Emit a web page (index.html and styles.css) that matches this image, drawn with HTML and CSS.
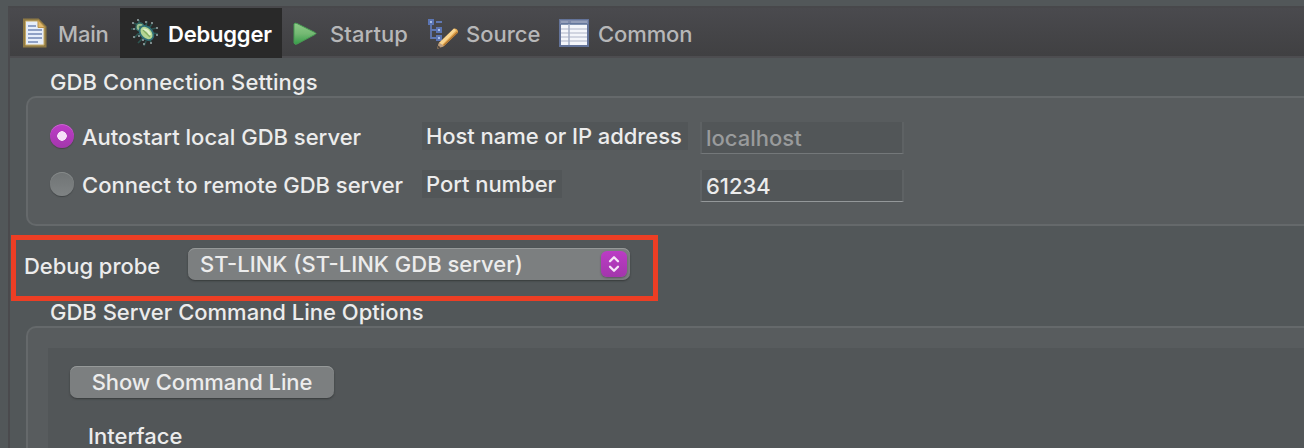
FILE: index.html
```html
<!DOCTYPE html>
<html lang="en">
<head>
<meta charset="utf-8">
<title>Debugger</title>
<link rel="stylesheet" href="styles.css">
</head>
<body>
<div class="window">
  <nav class="tabs">
    <div class="tab tab-main">
      <svg class="icon" width="26" height="32" viewBox="0 0 26 32">
        <path d="M2.500 3H16L23 10V29H2.500Z" fill="#e6eefb" stroke="#8f7a45" stroke-width="3"/>
        <path d="M3.500 4H16L22 10V28H3.500Z" fill="#e6eefb" stroke="#c9ad69"/>
        <path d="M16 3L23 10.500H16Z" fill="#e2b96b" stroke="#b9924a"/>
        <path d="M6 9H14M6 13H20M6 17H20M6 21H20M6 25H16" stroke="#8fa1c6" stroke-width="2"/>
      </svg><span>Main</span>
    </div>
    <div class="tab tab-debugger">
      <svg class="icon" width="32" height="32" viewBox="0 0 32 32">
        <path d="M10 3V6L12 9M3 6L7 7L10 10M2 12H7L12 12M18 4L17 9M23 7L20 11M5 21L9 17L13 16M9 26L14 21M15 29L17 24M22 26L21 22M29 17L24 16M28 11L23 12" fill="none" stroke="#2d5450" stroke-width="1.700"/>
        <path d="M9 2V4M3 6H5M22 6H24M27 11H29M4 20H6M9 19H11M14 27H16M21 26H23M27 18H29M17 4V6M4 12H6M14 22V24" stroke="#7e8b8c" stroke-width="2"/>
        <circle cx="11" cy="10" r="4" fill="#9dbf91" stroke="#2e6664" stroke-width="1.300"/>
        <circle cx="11" cy="10" r="1.300" fill="#4f8550"/>
        <ellipse cx="17.500" cy="16" rx="5.800" ry="8" transform="rotate(-43 17.500 16)" fill="#b5d693" stroke="#306f78" stroke-width="1.800"/>
        <path d="M14 13Q19 12 21 18" fill="none" stroke="#dff0ca" stroke-width="2.500"/>
        <path d="M14 13L21 20" stroke="#83ad62" stroke-width="1.300"/>
      </svg><span>Debugger</span>
    </div>
    <div class="tab tab-startup">
      <svg class="icon" width="26" height="26" viewBox="0 0 26 26">
        <defs><linearGradient id="play" x1="0" y1="0" x2="0" y2="1"><stop offset="0" stop-color="#8dcb87"/><stop offset=".5" stop-color="#74b873"/><stop offset="1" stop-color="#359d48"/></linearGradient></defs>
        <path d="M1 4Q1.500 2.500 4 3.500L22 12.500Q24 13.500 22 14.500L4 24Q1.500 25 1 23Z" fill="url(#play)" stroke="#479a52"/>
      </svg><span>Startup</span>
    </div>
    <div class="tab tab-source">
      <svg class="icon" width="32" height="32" viewBox="0 0 32 32">
        <path d="M4 6V21H9M4 13H9M9 5H15" fill="none" stroke="#6078b2" stroke-width="1.800"/>
        <path d="M2 3H6V7H2ZM10 11H14V15H10ZM10 19H14V23H10Z" fill="#a9bde4" stroke="#5b75b3" stroke-width="2"/>
        <path d="M27 11.500Q31 11.500 31 15.500L17 29L10 32L12 26Z" fill="#e9af58"/>
        <path d="M27 11.500L29 13.500L15 28L12 26Z" fill="#f8d592"/>
        <path d="M31 15.500L17 29L16 28L30 14.500Z" fill="#b27732"/>
        <path d="M12 25.500L17 29L10 32Z" fill="#bda083"/><path d="M11 28.500L14 30.500L10 32Z" fill="#54483f"/>
      </svg><span>Source</span>
    </div>
    <div class="tab tab-common">
      <svg class="icon" width="30" height="28" viewBox="0 0 30 28">
        <path d="M1 1H29V27H1Z" fill="#f4f6fb" stroke="#637399" stroke-width="2"/>
        <path d="M1 1H29V5H1Z" fill="#7f8bab"/><path d="M2 3H9M12 3H28" stroke="#a9b2c8"/>
        <path d="M2 5H28" stroke="#5d7299" stroke-width="1.500"/>
        <path d="M2 10H28M2 14H28M2 18H28M2 22H28" stroke="#c5cad9" stroke-width="1.300"/>
        <path d="M10 5V26" stroke="#a2adc5" stroke-width="1.500"/>
      </svg><span>Common</span>
    </div>
  </nav>
  <main class="panel">
    <h2 class="group-title t-conn">GDB Connection Settings</h2>
    <section class="group connection">
      <label class="option"><i class="radio checked"></i><span>Autostart local GDB server</span></label>
      <div class="cell"><span class="field-label label-host">Host name or IP address</span></div>
      <div class="field disabled">localhost</div>
      <label class="option"><i class="radio"></i><span>Connect to remote GDB server</span></label>
      <div class="cell"><span class="field-label label-port">Port number</span></div>
      <div class="field">61234</div>
    </section>
    <section class="probe">
      <span class="probe-label">Debug probe</span>
      <div class="select"><span>ST-LINK (ST-LINK GDB server)</span>
        <span class="stepper"><svg width="26" height="26" viewBox="0 0 26 26"><path d="M9 10.200L13 6.200L17 10.200M9 15.800L13 19.800L17 15.800" fill="none" stroke="#f5e5f7" stroke-width="2.300" stroke-linecap="round" stroke-linejoin="round"/></svg></span>
      </div>
    </section>
    <h2 class="group-title title-options">GDB Server Command Line Options</h2>
    <section class="group options">
      <div class="inner">
        <button class="button">Show Command Line</button>
        <div class="interface">Interface</div>
      </div>
    </section>
  </main>
</div>
</body>
</html>
```
FILE: styles.css
```css
* { box-sizing: border-box; }
body {
  margin: 0;
  height: 448px;
  overflow: hidden;
  background: #525759;
  color: #ececec;
  font: 450 22px/28px Inter, "Liberation Sans", sans-serif;
  white-space: nowrap;
}
.window {
  margin: 6px 0 0 8px;
  height: 442px;
  border-top: 2px solid #48484b;
  border-left: 2px solid #4a4a4d;
  overflow: hidden;
}
.tabs {
  display: flex;
  height: 50px;
  border-bottom: 2px solid #4d4d50;
  background: linear-gradient(#4a4a4e, #404042);
  color: #b7b7b8;
}
.tab { display: flex; align-items: center; height: 50px; flex: none; }
.tab span { padding-top: 2px; }
.icon { flex: none; display: block; }
.tab-main { width: 110px; padding-left: 12px; gap: 10px; letter-spacing: -0.2px; }
.tab-debugger { width: 162px; padding-left: 9px; gap: 7px; background: #292929; color: #fff; font-weight: 600; letter-spacing: -0.2px; }
.tab-startup { width: 136px; padding-left: 11px; gap: 11px; letter-spacing: 0.05px; }
.tab-source { width: 131px; padding-left: 9px; gap: 7px; }
.tab-common { padding-left: 10px; gap: 9px; letter-spacing: -0.1px; }
.panel { height: 390px; overflow: hidden; }
.group-title { margin: 10px 0 0 40px; height: 28px; font: inherit; }
.t-conn { letter-spacing: 0.1px; }
.group {
  margin-left: 16px;
  border: 2px solid #65696b;
  border-right: 0;
  border-radius: 10px 0 0 10px;
  background: #585c5e;
}
.connection {
  height: 130px;
  padding: 24px 0 0 22px;
  display: grid;
  grid-template-columns: 372px 278px 204px;
  grid-template-rows: 32px 32px;
  row-gap: 16px;
  align-content: start;
}
.option { display: flex; align-items: flex-start; gap: 8px; }
.option span { padding-top: 1px; }
.radio {
  flex: none;
  width: 24px;
  height: 24px;
  margin-top: 2px;
  border-radius: 50%;
  background: linear-gradient(#707475, #7f8384);
  box-shadow: 0 1px 1px #404446, inset 0 1px 0 #858989;
}
.checked { background: radial-gradient(circle, #f5e0f7 0 4.500px, transparent 5px), linear-gradient(#bd3cc7, #a337ac); box-shadow: 0 1px 1px #484249, inset 0 1px 0 #ca68d1; }
.field-label { display: block; height: 28px; padding-left: 4px; background: #525658; }
.label-host { width: 266px; letter-spacing: -0.05px; }
.label-port { width: 140px; letter-spacing: -0.05px; }
.field { height: 32px; padding: 2px 0 0 4px; border: 2px solid #5e6264; border-top: 0; border-bottom: 1px solid #74787a; background: #525658; }
.field:last-child { border-bottom-color: #94989a; }
.disabled { color: #999b9c; }
.probe {
  width: 647px;
  height: 66px;
  margin: 9px 0 0 1px;
  border: 5px solid #ed3e24;
  padding: 8px 0 0 8px;
  display: flex;
  align-items: flex-start;
}
.probe-label { width: 164px; padding-top: 4px; letter-spacing: -0.05px; }
.select {
  width: 442px;
  height: 32px;
  padding: 0 3px 0 12px;
  display: flex;
  align-items: center;
  justify-content: space-between;
  border-radius: 7px;
  background: #7c7f80;
  box-shadow: 0 1px 2px #36393a, inset 0 1px 0 #969999;
}
.stepper { width: 26px; height: 26px; border-radius: 6px; background: linear-gradient(#bb3cc5, #a336ac); box-shadow: 0 1px 2px #5d5360; }
.stepper svg { display: block; }
.title-options { margin-top: -3px; }
.options { height: 140px; padding: 20px 0 0 20px; border-bottom: 0; border-radius: 10px 0 0 0; }
.inner { height: 120px; padding: 18px 0 0 22px; background: #525658; }
.button {
  display: block;
  width: 264px;
  height: 32px;
  padding: 0;
  border: 0;
  border-radius: 7px;
  background: #7c7f80;
  color: #ececec;
  font: inherit;
  letter-spacing: -0.1px;
  box-shadow: 0 1px 2px #36393a, inset 0 1px 0 #969999;
}
.interface { padding: 24px 0 0 18px; }
```
